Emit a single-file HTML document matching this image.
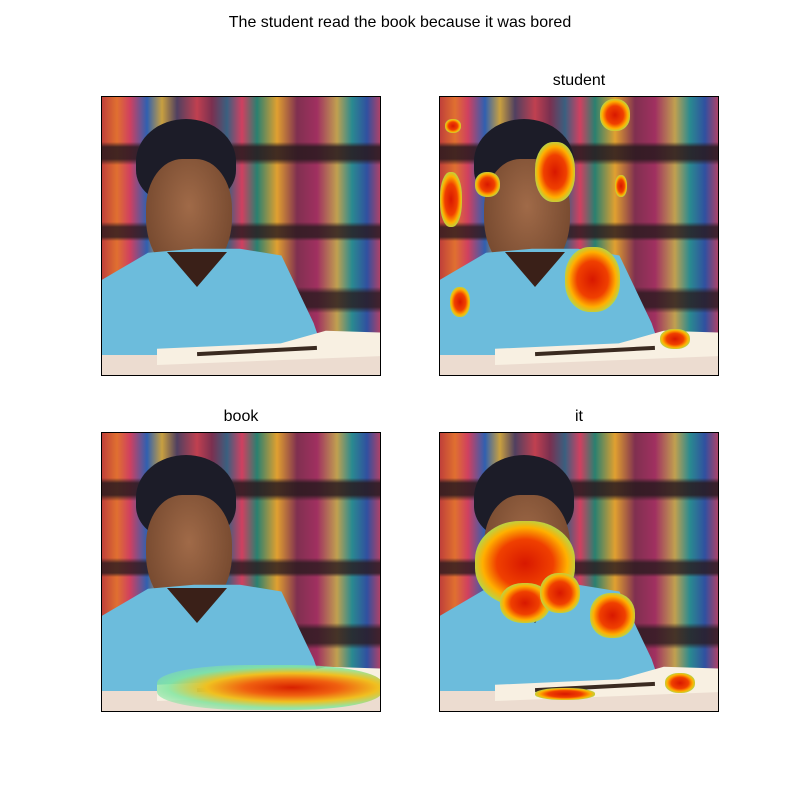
<!DOCTYPE html>
<html><head><meta charset="utf-8"><style>
body{margin:0;width:800px;height:800px;background:#fff;position:relative;overflow:hidden;font-family:"Liberation Sans","DejaVu Sans",sans-serif}
.t{position:absolute;font-size:16px;color:#000;text-align:center;white-space:nowrap}
.ax{position:absolute;width:280px;height:280px;border:1px solid #000;box-sizing:border-box;overflow:hidden}
.bg{position:absolute;inset:0;background:
linear-gradient(to bottom,rgba(30,20,30,0) 0,rgba(30,20,30,0) 45px,rgba(40,25,30,.85) 50px,rgba(40,25,30,.85) 62px,rgba(30,20,30,0) 68px,rgba(30,20,30,0) 125px,rgba(40,25,30,.8) 130px,rgba(40,25,30,.8) 140px,rgba(30,20,30,0) 144px,rgba(30,20,30,0) 190px,rgba(40,25,30,.8) 196px,rgba(40,25,30,.8) 210px,rgba(0,0,0,0) 216px),
linear-gradient(to right,#c0403a 0,#e07030 15px,#d04060 28px,#3060b0 45px,#c8a040 60px,#504060 75px,#c04050 95px,#7a3050 110px,#3a6080 125px,#d04060 140px,#2a8070 155px,#e0a030 175px,#803050 195px,#a03060 215px,#c0a050 235px,#2a8a90 250px,#3050a0 265px,#c04060 280px);}
.hair{position:absolute;left:34px;top:22px;width:100px;height:85px;border-radius:50% 50% 40% 40%;background:#1c1c28}
.face{position:absolute;left:44px;top:62px;width:86px;height:118px;border-radius:42% 42% 50% 50%;background:radial-gradient(ellipse at 50% 40%,#a06a48,#6a4028)}
.shirt{position:absolute;left:0;top:145px;width:230px;height:135px;background:#6cbcdc;clip-path:polygon(0 28%,20% 8%,40% 5%,60% 5%,78% 10%,92% 60%,100% 100%,0 100%)}
.collar{position:absolute;left:65px;top:155px;width:60px;height:35px;background:#3a2018;clip-path:polygon(0 0,100% 0,50% 100%)}
.table{position:absolute;left:0;top:258px;width:280px;height:22px;background:#ecdcd0}
.book{position:absolute;left:55px;top:232px;width:225px;height:36px;background:#f8f0e2;clip-path:polygon(0 55%,35% 45%,55% 40%,75% 5%,100% 10%,100% 75%,60% 85%,0 100%)}
.pg{position:absolute;left:95px;top:252px;width:120px;height:4px;background:#3a2a20;transform:rotate(-3deg)}
.h{position:absolute;border-radius:45%;background:radial-gradient(ellipse,#d81800 0,#f04000 40%,#ffb000 60%,#a0e060 78%,rgba(120,230,200,0) 100%)}
</style></head><body>
<div class="t" style="left:0;width:800px;top:14px">The student read the book because it was bored</div>
<div class="t" style="left:439px;width:280px;top:72px">student</div>
<div class="t" style="left:101px;width:280px;top:408px">book</div>
<div class="t" style="left:439px;width:280px;top:408px">it</div>

<div class="ax" style="left:101px;top:96px"><div class="bg"></div><div class="hair"></div><div class="face"></div><div class="shirt"></div><div class="collar"></div><div class="table"></div><div class="book"></div><div class="pg"></div></div>

<div class="ax" style="left:439px;top:96px"><div class="bg"></div><div class="hair"></div><div class="face"></div><div class="shirt"></div><div class="collar"></div><div class="table"></div><div class="book"></div><div class="pg"></div>
<div class="h" style="left:160px;top:2px;width:30px;height:32px"></div>
<div class="h" style="left:0;top:75px;width:22px;height:55px"></div>
<div class="h" style="left:95px;top:45px;width:40px;height:60px"></div>
<div class="h" style="left:35px;top:75px;width:25px;height:25px"></div>
<div class="h" style="left:125px;top:150px;width:55px;height:65px"></div>
<div class="h" style="left:10px;top:190px;width:20px;height:30px"></div>
<div class="h" style="left:5px;top:22px;width:16px;height:14px"></div>
<div class="h" style="left:220px;top:232px;width:30px;height:20px"></div>
<div class="h" style="left:175px;top:78px;width:12px;height:22px"></div>
</div>

<div class="ax" style="left:101px;top:432px"><div class="bg"></div><div class="hair"></div><div class="face"></div><div class="shirt"></div><div class="collar"></div><div class="table"></div><div class="book"></div><div class="pg"></div>
<div style="position:absolute;left:55px;top:232px;width:225px;height:45px;border-radius:40%;background:radial-gradient(ellipse at 60% 50%,#d82000 0,#f06010 25%,#f0c020 45%,rgba(130,230,160,.85) 65%,rgba(140,240,220,0) 100%)"></div>
</div>

<div class="ax" style="left:439px;top:432px"><div class="bg"></div><div class="hair"></div><div class="face"></div><div class="shirt"></div><div class="collar"></div><div class="table"></div><div class="book"></div><div class="pg"></div>
<div class="h" style="left:35px;top:88px;width:100px;height:85px"></div>
<div class="h" style="left:60px;top:150px;width:50px;height:40px"></div>
<div class="h" style="left:100px;top:140px;width:40px;height:40px"></div>
<div class="h" style="left:150px;top:160px;width:45px;height:45px"></div>
<div class="h" style="left:225px;top:240px;width:30px;height:20px"></div>
<div class="h" style="left:95px;top:255px;width:60px;height:12px"></div>
</div>
</body></html>
